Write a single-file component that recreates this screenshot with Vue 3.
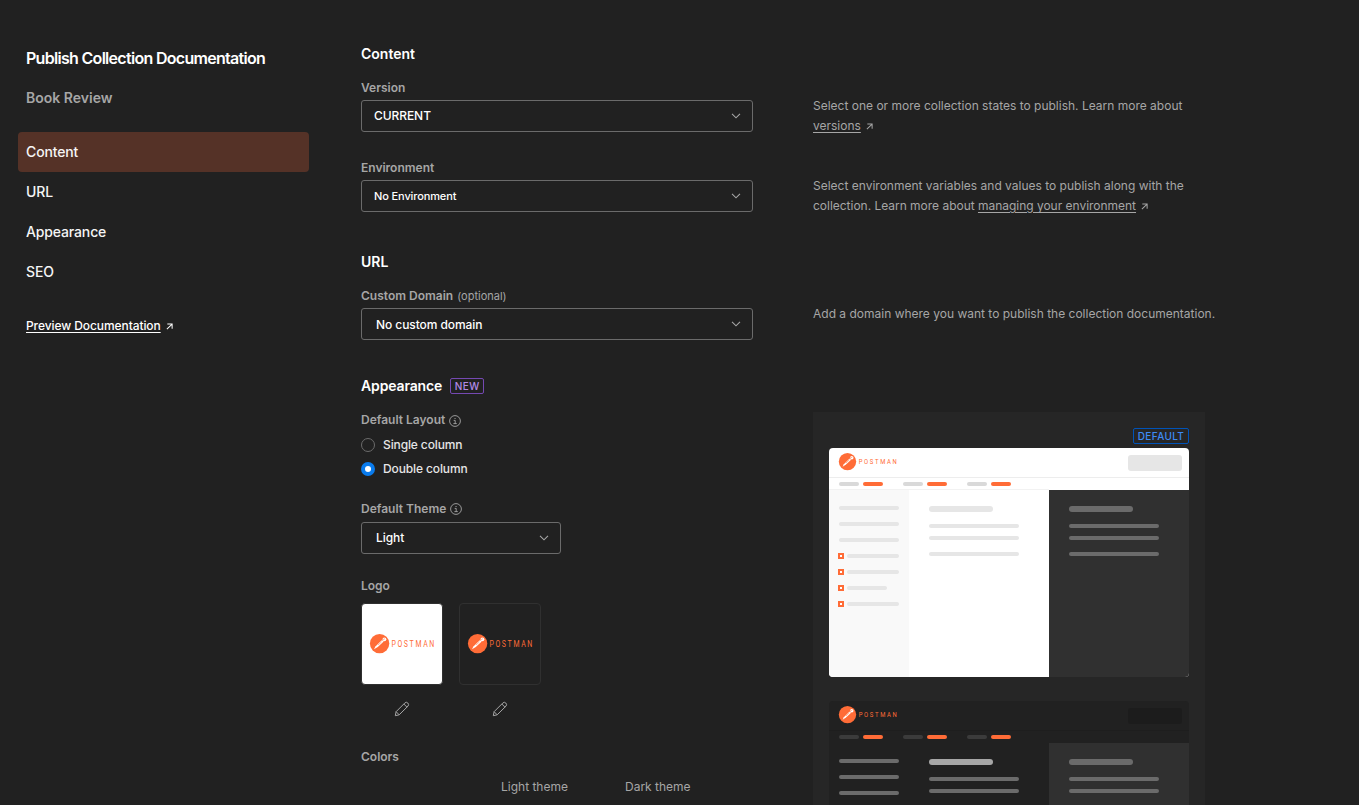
<script setup>
const navItems = ['Content', 'URL', 'Appearance', 'SEO']
const layouts = [
  { label: 'Single column', on: false },
  { label: 'Double column', on: true },
]
const themes = ['light', 'dark']
const tabs = [10, 74, 138]
const menuLines = [58, 74, 90]
const methods = [
  { y: 106, w: 52 },
  { y: 122, w: 52 },
  { y: 138, w: 40 },
  { y: 154, w: 52 },
]
const bodyLines = [76, 88, 104]
</script>

<template>
  <div class="page">
    <aside class="side">
      <h1>Publish Collection Documentation</h1>
      <p class="name">Book Review</p>
      <nav>
        <a v-for="(item, i) in navItems" :key="item" :class="{ active: i === 0 }">{{ item }}</a>
      </nav>
      <p class="preview-link"><span class="u">Preview Documentation</span><svg class="arrow" viewBox="0 0 8 8"><path d="M1.5 1.2H7V6.5M7 1.2L1 7" /></svg></p>
    </aside>

    <main class="form">
      <section>
        <h2>Content</h2>
        <div class="row">
          <div>
            <div class="label">Version</div>
            <div class="select"><span>CURRENT</span><svg class="chev" viewBox="0 0 10 6"><path d="M1 .8L5 4.8L9 .8" /></svg></div>
          </div>
          <p class="help">Select one or more collection states to publish. Learn more about<br><span class="u">versions</span><svg class="arrow" viewBox="0 0 8 8"><path d="M1.5 1.2H7V6.5M7 1.2L1 7" /></svg></p>
        </div>
        <div class="row">
          <div>
            <div class="label">Environment</div>
            <div class="select env"><span>No Environment</span><svg class="chev" viewBox="0 0 10 6"><path d="M1 .8L5 4.8L9 .8" /></svg></div>
          </div>
          <p class="help">Select environment variables and values to publish along with the<br><span class="tight">collection. Learn more about <span class="u">managing your environment</span></span><svg class="arrow" viewBox="0 0 8 8"><path d="M1.5 1.2H7V6.5M7 1.2L1 7" /></svg></p>
        </div>
      </section>

      <section class="url">
        <h2>URL</h2>
        <div class="row">
          <div>
            <div class="label">Custom Domain<span class="opt">(optional)</span></div>
            <div class="select wide domain"><span>No custom domain</span><svg class="chev" viewBox="0 0 10 6"><path d="M1 .8L5 4.8L9 .8" /></svg></div>
          </div>
          <p class="help">Add a domain where you want to publish the collection documentation.</p>
        </div>
      </section>

      <section class="cols">
        <div>
          <h2><span class="appearance">Appearance</span><span class="badge new">NEW</span></h2>
          <div class="label">Default Layout<svg class="info" viewBox="0 0 12 12"><circle cx="6" cy="6" r="5.4" /><path d="M4.7 5.4H6.2V8.6M4.4 8.6H7.8" /><path d="M5.5 3.5H6.6" /></svg></div>
          <div class="radios">
            <div v-for="l in layouts" :key="l.label" class="radio"><i :class="{ on: l.on }"></i><span>{{ l.label }}</span></div>
          </div>
          <div class="label theme">Default Theme<svg class="info" viewBox="0 0 12 12"><circle cx="6" cy="6" r="5.4" /><path d="M4.7 5.4H6.2V8.6M4.4 8.6H7.8" /><path d="M5.5 3.5H6.6" /></svg></div>
          <div class="select wide small"><span>Light</span><svg class="chev" viewBox="0 0 10 6"><path d="M1 .8L5 4.8L9 .8" /></svg></div>

          <div class="label logo-label">Logo</div>
          <div class="logos">
            <div v-for="t in themes" :key="t" class="logo-item">
              <div class="logo-box" :class="t">
                <svg width="66" height="20" viewBox="0 0 66 20">
                  <circle cx="10.6" cy="9.6" r="9.7" fill="#ff6c37" />
                  <path d="M5 15.3L6.4 12.4L13 5.9L14.7 7.5L8.8 12.9Z" fill="#fff" />
                  <circle cx="15.4" cy="5.3" r="1.9" fill="#fff" />
                  <path d="M12.6 6.2L16 4.7M9 11L12.6 7.8" stroke="#ff6c37" stroke-width=".5" />
                  <text transform="translate(22.4 13) scale(.74 1)" textLength="58" class="wordmark">POSTMAN</text>
                </svg>
              </div>
              <svg class="pencil" viewBox="0 0 16 16"><path d="M1.3 14.7L2.1 10.7L10.9 1.9Q12.4 .6 13.8 2Q15.3 3.6 14 5.1L5.2 13.8L1.3 14.7ZM9.8 3L12.9 6.1M2.1 10.7L5.2 13.8" /></svg>
            </div>
          </div>

          <div class="label colors">Colors</div>
          <div class="theme-heads"><span>Light theme</span><span>Dark theme</span></div>
        </div>

        <div class="panel">
          <span class="badge default">DEFAULT</span>
          <svg v-for="t in themes" :key="t" class="mock" :class="t" width="360" height="229" viewBox="0 0 360 229">
            <rect class="bg" width="360" height="229" />
            <rect class="menu" y="42" width="80" height="187" />
            <rect class="sep" y="29" width="360" height="1" />
            <rect class="sep faint" y="41" width="220" height="1" />
            <rect class="code" x="220" y="42" width="140" height="187" />
            <circle cx="18.5" cy="13.6" r="8.7" fill="#ff6c37" />
            <path d="M13.6 18.8L14.8 16.2L20.6 10.4L22.1 11.8L17 16.5Z" fill="#fff" />
            <circle cx="22.8" cy="9.8" r="1.7" fill="#fff" />
            <path d="M20.4 10.5L23.4 9.1M17 15L20.4 11.8" stroke="#ff6c37" stroke-width=".5" />
            <text transform="translate(29.7 16.4) scale(.74 1)" textLength="51.4" class="wordmark mini">POSTMAN</text>
            <rect class="button" x="299" y="7" width="54" height="16" rx="3" />
            <template v-for="x in tabs" :key="x">
              <rect class="tab" :x="x" y="34" width="20" height="4" rx="2" />
              <rect fill="#ff6c37" :x="x + 24" y="34" width="20" height="4" rx="2" />
            </template>
            <rect v-for="y in menuLines" :key="y" class="line" x="10" :y="y" width="60" height="4" rx="2" />
            <template v-for="m in methods" :key="m.y">
              <rect x="10" :y="m.y" width="4" height="4" fill="#fff" stroke="#ff6c37" stroke-width="2" />
              <rect class="line" x="18" :y="m.y" :width="m.w" height="4" rx="2" />
            </template>
            <rect class="heading" x="100" y="58" width="64" height="6" rx="3" />
            <rect class="code-line" x="240" y="58" width="64" height="6" rx="3" />
            <template v-for="y in bodyLines" :key="y">
              <rect class="line" x="100" :y="y" width="90" height="4" rx="2" />
              <rect class="code-line" x="240" :y="y" width="90" height="4" rx="2" />
            </template>
          </svg>
        </div>
      </section>
    </main>
  </div>
</template>

<style>
body { background: #212121; overflow: hidden; }
</style>

<style scoped>
.page {
  display: flex;
  gap: 52px;
  box-sizing: border-box;
  height: 805px;
  padding: 44px 0 0 18px;
  overflow: hidden;
  background: #212121;
  color: #fff;
  font: 400 12px/20px Inter, "Liberation Sans", sans-serif;
}
h1, h2, p { margin: 0; }
.side { flex: 0 0 291px; }
.side h1 { padding: 4px 8px 0; font-size: 16px; line-height: 20px; font-weight: 600; letter-spacing: -0.7px; white-space: nowrap; }
.side .name { padding: 20px 8px 0; font-size: 14px; font-weight: 600; color: #a6a6a6; }
nav { margin-top: 24px; }
nav a { display: block; padding: 0 8px; line-height: 40px; font-size: 14px; font-weight: 500; letter-spacing: -.14px; color: #f5f5f5; border-radius: 4px; }
nav .active { background: #553227; }
.preview-link { padding: 24px 8px 0; font-weight: 500; letter-spacing: -.08px; }
.u { text-decoration: underline; text-underline-offset: 2px; }
.arrow { width: 7px; height: 7px; margin-left: 5px; fill: none; stroke: currentColor; stroke-width: 1.15; }
.tight { letter-spacing: -.02px; }

.form { flex: none; width: 855px; }
section { margin-bottom: 40px; }
.url { margin-bottom: 36px; }
h2 { display: flex; align-items: center; height: 20px; margin-bottom: 14px; font-size: 14px; line-height: 20px; font-weight: 600; }
.appearance { letter-spacing: -.14px; }
.row, .cols { display: grid; grid-template-columns: 392px 1fr; column-gap: 60px; }
.row { height: 54px; }
.row + .row { margin-top: 26px; }
.label { display: flex; align-items: center; height: 20px; font-weight: 600; color: #a6a6a6; }
.opt { margin-left: 4px; font-size: 11px; font-weight: 400; }
.select {
  display: flex; align-items: center; justify-content: space-between;
  box-sizing: border-box; height: 32px; margin-top: 2px; padding: 0 11px 0 12px;
  border: 1px solid #6b6b6b; border-radius: 3px; font-weight: 500; letter-spacing: -.07px;
}
.select.env { font-size: 11px; letter-spacing: -.12px; }
.select.wide { padding-left: 14px; }
.select.domain span { padding-top: 2px; }
.select.small { width: 200px; margin-top: 3px; }
.chev { width: 10px; height: 6px; fill: none; stroke: #a6a6a6; stroke-width: 1.1; }
.help { margin-top: 18px; color: #a6a6a6; white-space: nowrap; }

.badge { box-sizing: border-box; height: 16px; border: 1px solid; border-radius: 2px; font-size: 10px; line-height: 15px; font-weight: 500; text-align: center; }
.new { width: 34px; margin-left: 8px; color: #b18ae6; border-color: #7549b2; letter-spacing: .4px; }
.default { display: block; width: 56px; margin: 0 0 4px auto; color: #3d8bf5; border-color: #0053b8; letter-spacing: .4px; }
.info { width: 12px; height: 12px; margin: 2px 0 0 4px; fill: none; stroke: #a6a6a6; stroke-width: .9; }
.radios { display: grid; gap: 4px; margin-top: 5px; }
.radio { display: flex; align-items: center; gap: 8px; font-weight: 500; letter-spacing: -.12px; color: #e6e6e6; }
.radio i { box-sizing: border-box; width: 14px; height: 14px; border: 1px solid #6b6b6b; border-radius: 50%; }
.radio i.on { border: 4px solid #097bed; background: #fff; }
.theme { margin-top: 20px; }
.theme .info { margin-top: 0; }
.logo-label { margin-top: 22px; }
.logos { display: flex; gap: 16px; margin-top: 7px; }
.logo-item { display: flex; flex-direction: column; align-items: center; }
.logo-box { display: flex; align-items: center; justify-content: center; box-sizing: border-box; width: 82px; height: 82px; border: 1px solid #303030; border-radius: 4px; }
.logo-box svg { overflow: visible; }
.logo-box.light { background: #fff; }
.wordmark { fill: #ff6c37; font: 400 9.4px Roboto, sans-serif; }
.wordmark.mini { font-size: 8px; }
.pencil { width: 16px; height: 16px; margin-top: 16px; fill: none; stroke: #a6a6a6; stroke-width: 1; }
.colors { margin-top: 30px; }
.theme-heads { display: flex; margin: 10px 0 0 140px; color: #a6a6a6; }
.theme-heads span { width: 124px; }

.panel { box-sizing: border-box; width: 392px; height: 600px; margin-top: 36px; padding: 16px; background: #262626; }
.mock { display: block; margin-bottom: 24px; border-radius: 4px; }
.light .bg { fill: #fff; }
.light .menu { fill: #f9f9f9; }
.light .sep { fill: #ededed; }
.light .faint { fill: #f2f2f2; }
.light .tab { fill: #d9d9d9; }
.light .line, .light .heading, .light .button { fill: #e6e6e6; }
.dark .bg, .dark .menu { fill: #212121; }
.dark .sep { fill: #1e1e1e; }
.dark .faint { fill: #212121; }
.dark .tab { fill: #3b3b3b; }
.dark .line { fill: #6b6b6b; }
.dark .heading { fill: #a6a6a6; }
.dark .button { fill: #1c1c1c; }
.code { fill: #303030; }
.code-line { fill: #6b6b6b; }
</style>
